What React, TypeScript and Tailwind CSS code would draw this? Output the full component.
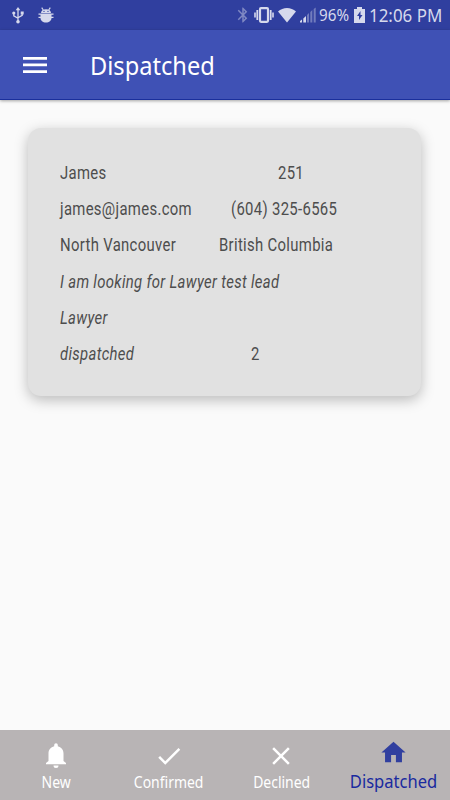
import type { ReactNode } from "react";
import { MdBluetooth, MdCheck, MdClose, MdHome } from "react-icons/md";

const rows = [
  { left: "James", right: "251", gap: "w-[218px]" },
  { left: "james@james.com", right: "(604) 325-6565", gap: "w-[171px]" },
  { left: "North Vancouver", right: "British Columbia", gap: "w-[159px]" },
  { left: "I am looking for Lawyer test lead", italic: true, gap: "w-[300px]" },
  { left: "Lawyer", italic: true, gap: "w-[191px]" },
  { left: "dispatched", right: "2", italic: true, gap: "w-[191px]" },
];

function Condensed({ children }: { children: ReactNode }) {
  return <span className="inline-block origin-left scale-x-[0.85] whitespace-nowrap tracking-[0.38px]">{children}</span>;
}

function StatusBar() {
  return (
    <div className="flex h-[30px] shrink-0 items-center bg-[#303f9f] text-[#d6d9ec]">
      <svg viewBox="0 0 12 17" className="ml-[12px] h-[17px] w-3" fill="currentColor">
        <path d="M6 0 8.300 3.300H3.700z" />
        <path d="M6 2v12M1.800 6.500v2.300L6 11.300M10.200 6v2.300L6 10.800" fill="none" stroke="currentColor" strokeWidth="1.300" />
        <circle cx="6" cy="14.700" r="1.800" />
        <circle cx="1.800" cy="6" r="1.600" />
        <path d="M8.700 4.500h3v3h-3z" />
      </svg>
      <svg viewBox="0 0 16 16" className="ml-[14px] h-4 w-4" fill="currentColor">
        <path d="M3 6C3 3.500 5 2.200 8 2.200S13 3.500 13 6zM2.500 6.900h11V11c0 2.500-2.300 4.500-5.500 4.500S2.500 13.500 2.500 11z" />
        <path d="M3.700.7 5.300 3M12.300.7 10.700 3M.5 7.200h15M.5 10.300h15" stroke="currentColor" strokeWidth="1.200" />
        <circle cx="6" cy="4.400" r=".6" fill="#303f9f" />
        <circle cx="10" cy="4.400" r=".6" fill="#303f9f" />
      </svg>
      <MdBluetooth className="ml-[180px] size-[18px] text-[#7f88c3]" />
      <svg viewBox="0 0 20 18" className="ml-[2px] h-[18px] w-5" fill="none" stroke="currentColor">
        <rect x="6" y="2.200" width="8" height="13.600" rx="1" strokeWidth="2.200" />
        <path d="M3.300 4v10M16.700 4v10" strokeWidth="1.800" />
        <path d="M1 6.500v5M19 6.500v5" strokeWidth="1.600" />
      </svg>
      <svg viewBox="0 0 18 16" className="ml-1 h-4 w-[18px]" fill="currentColor">
        <path d="M0 4.500C5-.2 13-.2 18 4.500L9 15.500z" />
      </svg>
      <svg viewBox="0 0 16 16" className="ml-1 h-4 w-4" fill="currentColor">
        <path d="M0 15.500v-1.500l2-1.500v3zM3.300 15.500v-4L6 9v6.500z" />
        <path d="M7 15.500V8l2-2v9.500zM10.300 15.500V5l2-2v12.500zM13.700 15.500V2L15.700.5v15z" opacity=".4" />
      </svg>
      <span className="ml-[3px] w-[31px] origin-left scale-x-[0.95] text-base">96%</span>
      <svg viewBox="0 0 11 16" className="ml-1 h-4 w-[11px]" fill="currentColor">
        <path d="M3 0h5v2h3v14H0V2h3z" />
        <path d="M6.500 4 3 9h2v4l3.500-5h-2z" fill="#303f9f" />
      </svg>
      <span className="ml-1 origin-left scale-x-[0.94] whitespace-nowrap text-[18px]">12:06 PM</span>
    </div>
  );
}

function Tab({ icon, label, active }: { icon: ReactNode; label: string; active?: boolean }) {
  return (
    <div className={active ? "flex flex-1 flex-col items-center pt-[9px] text-[#303f9f]" : "flex flex-1 flex-col items-center pt-3 text-white"}>
      <div className="flex h-[27px] items-center">{icon}</div>
      <span className={active ? "scale-x-[0.92] text-[18px] leading-[30px] text-[#1a2a9f]" : "scale-x-[0.9] text-[15.500px] leading-[27px]"}>{label}</span>
    </div>
  );
}

export default function App() {
  return (
    <div className="flex h-[800px] w-[450px] flex-col overflow-hidden bg-[#fafafa] font-['Noto_Sans',sans-serif]">
      <StatusBar />
      <header className="flex h-[70px] shrink-0 items-center border-b border-[#1a2f9c] bg-[#3f51b5] text-white shadow-[0_1px_3px_rgba(0,0,0,0.35)]">
        <svg viewBox="0 0 24 16" className="ml-[23px] h-4 w-6" fill="currentColor">
          <path d="M0 0h24v2.700H0zM0 6.600h24v2.700H0zM0 13.300h24V16H0z" />
        </svg>
        <h1 className="ml-[43px] origin-left scale-x-[0.945] pt-[2px] text-[25px] leading-none">Dispatched</h1>
      </header>

      <main className="flex-1 pl-[28px] pt-[28px]">
        <div className="h-[268px] w-[393px] rounded-[13px] bg-[#e1e1e1] px-8 pt-[27px] shadow-[0_4px_14px_rgba(0,0,0,0.26)]">
          {rows.map((row) => (
            <div key={row.left} className="flex h-[36.200px] items-center font-[Roboto] text-[17.500px] text-[#4d4d4d]">
              <div className={`${row.gap} shrink-0 ${row.italic ? "italic" : ""}`}>
                <Condensed>{row.left}</Condensed>
              </div>
              {row.right && <Condensed>{row.right}</Condensed>}
            </div>
          ))}
        </div>
      </main>

      <nav className="flex h-[70px] shrink-0 bg-[#b8b4b5]">
        <Tab
          label="New"
          icon={
            <svg viewBox="0 0 20 25" className="h-[25px] w-5" fill="currentColor">
              <path d="M7.500 22.500h5a2.500 2.500 0 0 1-5 0zM17.500 18v-7.500c0-3.800-2.300-6.400-5.700-7.200V2a1.800 1.800 0 0 0-3.600 0v1.300c-3.400.8-5.700 3.400-5.700 7.200V18L0 20v1.300h20V20z" />
            </svg>
          }
        />
        <Tab label="Confirmed" icon={<MdCheck className="size-[30px]" />} />
        <Tab label="Declined" icon={<MdClose className="size-[30px]" />} />
        <Tab label="Dispatched" active icon={<MdHome className="size-[29px]" />} />
      </nav>
    </div>
  );
}
